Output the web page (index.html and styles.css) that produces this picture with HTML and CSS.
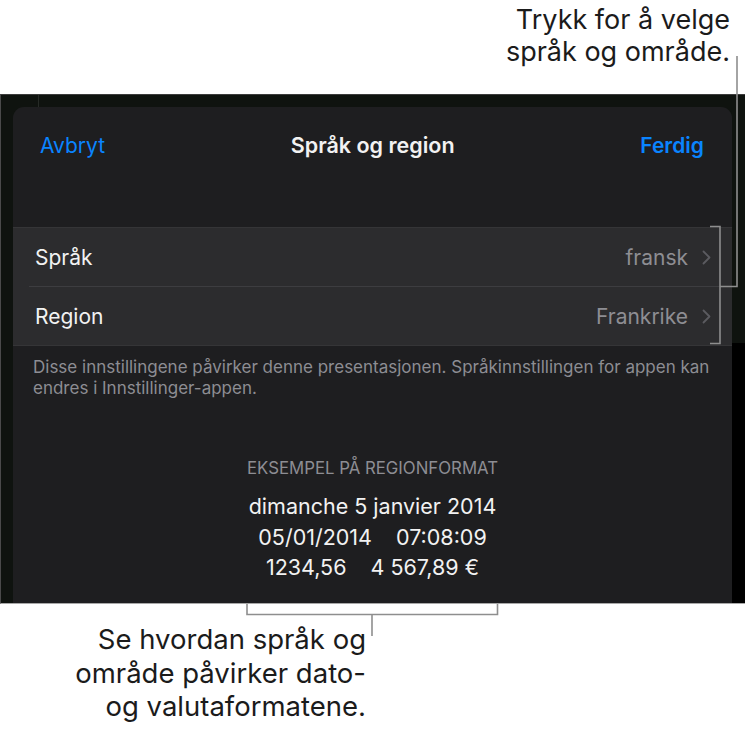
FILE: index.html
```html
<!DOCTYPE html>
<html lang="no">
<head>
<meta charset="utf-8">
<title>Språk og region</title>
<link rel="stylesheet" href="styles.css">
</head>
<body>
<div class="page">
  <div class="callout-top"><p>Trykk for å velge<br>språk og område.</p></div>
  <div class="screen">
    <div class="edge-left"></div>
    <div class="sheet">
      <div class="nav">
        <span class="nav-btn">Avbryt</span>
        <span class="nav-title">Språk og region</span>
        <span class="nav-btn done">Ferdig</span>
      </div>
      <div class="group">
        <div class="row">
          <span class="label">Språk</span>
          <span class="value">fransk</span>
          <svg class="chev" width="9" height="15" viewBox="0 0 9 15"><path d="M1.5 1.5 L7.5 7.5 L1.5 13.5" fill="none" stroke="#5b5b60" stroke-width="1.8" stroke-linecap="round" stroke-linejoin="round"/></svg>
        </div>
        <div class="sep"></div>
        <div class="row">
          <span class="label">Region</span>
          <span class="value">Frankrike</span>
          <svg class="chev" width="9" height="15" viewBox="0 0 9 15"><path d="M1.5 1.5 L7.5 7.5 L1.5 13.5" fill="none" stroke="#5b5b60" stroke-width="1.8" stroke-linecap="round" stroke-linejoin="round"/></svg>
        </div>
      </div>
      <p class="footnote">Disse innstillingene påvirker denne presentasjonen. Språkinnstillingen for appen kan endres i Innstillinger-appen.</p>
      <div class="example">
        <div class="example-title">EKSEMPEL PÅ REGIONFORMAT</div>
        <div class="example-line">dimanche 5 janvier 2014</div>
        <div class="example-line pair"><span>05/01/2014</span><span>07:08:09</span></div>
        <div class="example-line pair"><span>1234,56</span><span>4 567,89 €</span></div>
      </div>
    </div>
    <div class="edge-right"><div class="edge-right-top"></div></div>
  </div>
  <div class="callout-bottom"><p>Se hvordan språk og<br>område påvirker dato-<br>og valutaformatene.</p></div>
  <svg class="leaders" width="745" height="729" viewBox="0 0 745 729">
    <line x1="38.5" y1="95" x2="38.5" y2="107" stroke="#262a26" stroke-width="1"/>
    <g fill="none" stroke="#8e8e8e" stroke-width="1.6">
      <polyline points="737,56 737,286.5 720,286.5"/>
      <polyline points="710,226.5 720,226.5 720,343.5 710,343.5"/>
      <polyline points="247,604 247,614.5 497.5,614.5 497.5,604"/>
      <line x1="372" y1="614.5" x2="372" y2="636"/>
    </g>
  </svg>
</div>
</body>
</html>
```

FILE: styles.css
```css
* { box-sizing: border-box; }
html, body { margin: 0; padding: 0; background: #fff; }
body { font-family: Inter, "Noto Sans", "Liberation Sans", sans-serif; }

.page {
  position: relative;
  width: 745px;
  height: 729px;
  overflow: hidden;
}

.callout-top {
  height: 94px;
  padding: 4px 15px 0 0;
  text-align: right;
}
.callout-top p {
  margin: 0;
  font-size: 27px;
  line-height: 32px;
  color: #1b1b1b;
}

.screen {
  display: flex;
  height: 510px;
  border-top: 1px solid #3c3c3c;
  border-bottom: 1px solid #a8a8a8;
  border-left: 1px solid #4a4a4a;
  background: #0f130f;
}
.edge-left { width: 12px; flex: none; }
.edge-right {
  width: 13px;
  flex: none;
  background: #000;
}
.edge-right-top { height: 248px; background: #0f130f; }

.sheet {
  flex: 1;
  margin-top: 12px;
  background: #1e1e20;
  border-radius: 11px 11px 0 0;
  display: flex;
  flex-direction: column;
}

.nav {
  height: 76px;
  display: flex;
  align-items: center;
  justify-content: space-between;
  padding: 0 28px 0 27px;
}
.nav-btn {
  font-size: 21px;
  color: #0a84ff;
}
.nav-btn.done { font-weight: 600; }
.nav-title {
  font-size: 21.5px;
  font-weight: 600;
  color: #f2f2f2;
}

.group {
  margin-top: 44px;
  background: #2c2c2e;
  border-top: 1px solid #353537;
  border-bottom: 1px solid #353537;
}
.row {
  height: 58px;
  display: flex;
  align-items: center;
  padding: 0 21px 0 22px;
  font-size: 21px;
}
.label { color: #f2f2f2; flex: 1; }
.value { color: #8e8e93; margin-right: 14px; }
.chev { display: block; }
.sep {
  height: 1px;
  margin-left: 16px;
  background: #3d3d40;
}

.footnote {
  margin: 11px 0 0 0;
  padding: 0 8px 0 20px;
  font-size: 17px;
  line-height: 21px;
  color: #8d8d93;
}

.example {
  margin-top: 58px;
  text-align: center;
}
.example-title {
  font-size: 16.8px;
  line-height: 22px;
  color: #8d8d93;
  margin-bottom: 12px;
}
.example-line {
  font-size: 21.5px;
  line-height: 30.5px;
  color: #f2f2f2;
}
.example-line.pair {
  display: flex;
  justify-content: center;
  gap: 24px;
}

.callout-bottom {
  padding: 19px 0 0 0;
  width: 366px;
  text-align: right;
}
.callout-bottom p {
  margin: 0;
  font-size: 27.5px;
  line-height: 33.5px;
  color: #1b1b1b;
}

.leaders {
  position: absolute;
  left: 0;
  top: 0;
  pointer-events: none;
}
```
